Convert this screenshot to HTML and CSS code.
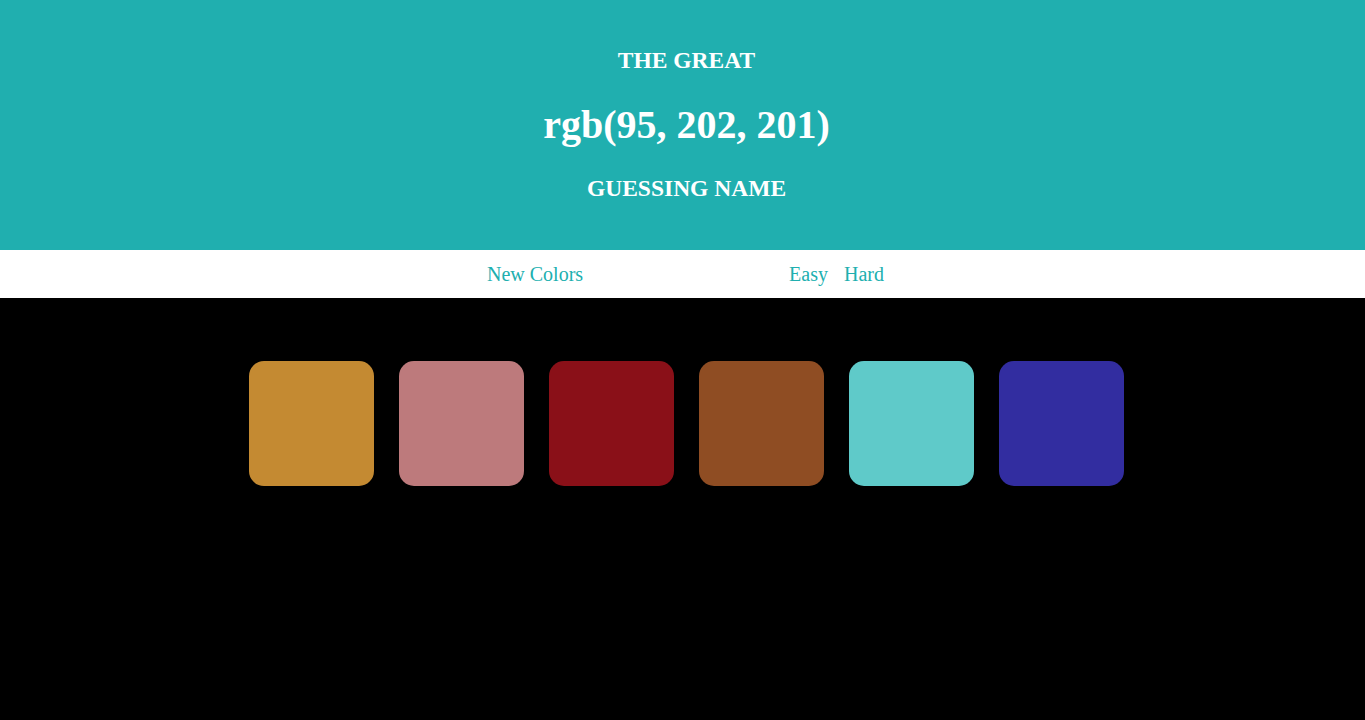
FILE: index.html
```html
<!DOCTYPE html>
<html>
<head>
<meta charset="utf-8">
<title>Colour Game</title>
<link rel="stylesheet" href="styles.css">
</head>
<body>
  <header class="banner">
    <h2 class="sub">THE GREAT</h2>
    <h1 class="target">rgb(95, 202, 201)</h1>
    <h2 class="sub">GUESSING NAME</h2>
  </header>
  <nav class="stripe">
    <button class="btn reset">New Colors</button>
    <span class="message"></span>
    <button class="btn">Easy</button>
    <button class="btn">Hard</button>
  </nav>
  <main class="board">
    <div class="square" style="background: rgb(196, 138, 50)"></div>
    <div class="square" style="background: rgb(189, 122, 124)"></div>
    <div class="square" style="background: rgb(138, 16, 24)"></div>
    <div class="square" style="background: rgb(143, 77, 35)"></div>
    <div class="square" style="background: rgb(95, 202, 201)"></div>
    <div class="square" style="background: rgb(50, 45, 160)"></div>
  </main>
</body>
</html>
```
FILE: styles.css
```css
html, body {
  margin: 0;
  padding: 0;
  background: #000;
  font-family: "Liberation Serif", "Times New Roman", serif;
}

.banner {
  background: rgb(32, 175, 175);
  color: #fff;
  height: 250px;
  box-sizing: border-box;
  padding-top: 45px;
  padding-left: 8px;
  text-align: center;
}

.sub {
  margin: 0;
  font-size: 23.5px;
  font-weight: bold;
  line-height: 30px;
}

.target {
  margin: 27px 0 25px;
  font-size: 40px;
  font-weight: bold;
  line-height: 46px;
}

.stripe {
  height: 48px;
  background: #fff;
  display: flex;
  justify-content: center;
  align-items: center;
  padding-left: 6px;
}

.btn {
  border: none;
  background: none;
  padding: 0 8px;
  margin: 0;
  font-family: inherit;
  font-size: 20px;
  color: rgb(32, 175, 175);
  cursor: pointer;
  line-height: 24px;
}

.message {
  display: inline-block;
  width: 190px;
}

.board {
  display: flex;
  justify-content: center;
  gap: 25px;
  padding-top: 63px;
  padding-left: 8px;
}

.square {
  width: 125px;
  height: 125px;
  border-radius: 15px;
}
```
